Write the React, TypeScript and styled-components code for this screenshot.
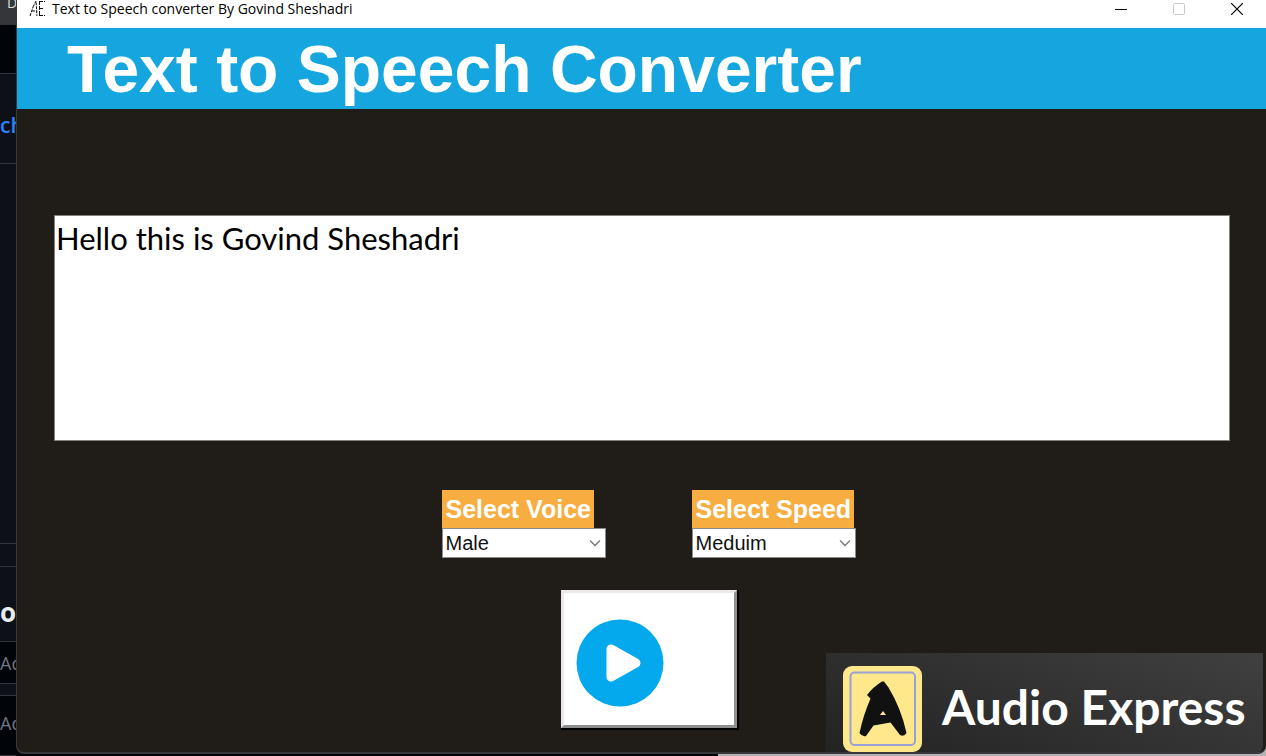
import React from "react";
import styled, { createGlobalStyle } from "styled-components";

const GlobalStyle = createGlobalStyle`
  * { box-sizing: border-box; }
  html, body, #root { height: 100%; margin: 0; }
  body { background: #010409; overflow: hidden; font-family: "Liberation Sans", Arial, sans-serif; }
`;

const Desktop = styled.div`
  display: flex;
  height: 100vh;
  background: linear-gradient(90deg, #020307 0 718px, #b5b2b2 718px);
`;

const Behind = styled.aside`
  width: 16px;
  flex: none;
  display: flex;
  flex-direction: column;
  overflow: hidden;
  white-space: nowrap;
  background: #0d1117;
  font-family: "Open Sans", "Noto Sans", sans-serif;
`;

const Strip = styled.div<{ $h: number; $bg?: string; $color?: string; $size?: number; $weight?: number; $left?: number; $top?: number; $bottom?: number }>`
  flex: none;
  height: ${(p) => p.$h}px;
  padding: ${(p) => p.$top ?? 0}px 0 ${(p) => p.$bottom ?? 0}px ${(p) => p.$left ?? 0}px;
  display: flex;
  align-items: center;
  border-bottom: 1px solid #30363d;
  background: ${(p) => p.$bg ?? "#0d1117"};
  color: ${(p) => p.$color ?? "#6e7681"};
  font-size: ${(p) => p.$size ?? 18}px;
  line-height: 24px;
  font-weight: ${(p) => p.$weight ?? 400};
`;

const AppWindow = styled.main`
  flex: 1;
  min-width: 0;
  margin-bottom: 2px;
  display: flex;
  flex-direction: column;
  border: solid #38373a;
  border-width: 0 0 2px 1px;
  border-radius: 0 0 8px 8px;
  background: #201c17;
  overflow: hidden;
`;

const TitleBar = styled.header`
  flex: none;
  height: 28px;
  padding: 0 21px 10px 12px;
  display: flex;
  align-items: center;
  gap: 6px;
  background: #fff;
  color: #000;
`;

const WindowTitle = styled.span`
  flex: 1;
  font: 14px/18px "Open Sans", "Noto Sans", sans-serif;
`;

const Controls = styled.div`
  display: flex;
  gap: 42px;
`;

const ControlButton = styled.button`
  width: 16px;
  height: 18px;
  padding: 0;
  border: 0;
  background: none;
  display: grid;
  place-items: center;
`;

const Banner = styled.h1`
  flex: none;
  height: 81px;
  margin: 0;
  padding: 1px 0 0 50px;
  background: #16a6df;
  color: #fff;
  font-size: 66px;
  line-height: 81px;
  font-weight: 700;
  white-space: nowrap;
`;

const Form = styled.form`
  flex: 1;
  min-height: 0;
  display: flex;
  flex-direction: column;
  padding: 106px 0 0;
`;

const Message = styled.textarea`
  flex: none;
  height: 226px;
  margin: 0 36px 49px 37px;
  padding: 3px 1px;
  border: 1px solid #828180;
  outline: 0;
  resize: none;
  background: #fff;
  color: #000;
  font: 31px/38px Lato, sans-serif;
`;

const Options = styled.div`
  display: flex;
  justify-content: center;
  gap: 86px;
  padding-left: 14px;
`;

const Field = styled.div`
  width: 164px;
  display: flex;
  flex-direction: column;
  align-items: flex-start;
`;

const FieldLabel = styled.label`
  height: 38px;
  padding: 0 3px 0 4px;
  background: #f8ad40;
  color: #fff;
  font-size: 25px;
  line-height: 38px;
  font-weight: 700;
  white-space: nowrap;
`;

const SelectWrap = styled.div`
  width: 100%;
  display: grid;
  align-items: center;
  & > * { grid-area: 1 / 1; }
  & > svg { justify-self: end; margin-right: 5px; pointer-events: none; }
`;

const Select = styled.select`
  width: 100%;
  height: 30px;
  padding: 0 3px;
  appearance: none;
  border: 1px solid #8c8c8c;
  border-radius: 0;
  background: #fff;
  color: #111;
  font: 20px/28px "Liberation Sans", Arial, sans-serif;
`;

const Footer = styled.div`
  flex: 1;
  min-height: 0;
  display: grid;
  grid-template-columns: 1fr 176px 1fr;
  padding: 32px 3px 0 17px;
`;

const PlayButton = styled.button`
  grid-column: 2;
  height: 138px;
  padding: 8px 0 0 12px;
  border: 3px solid;
  border-color: #ece8e9 #8f8f8f #8f8f8f #ece8e9;
  border-radius: 0;
  background: #fff;
  box-shadow: 1px 1px 0 1px #000;
  display: flex;
  align-items: center;
`;

const Brand = styled.div`
  grid-column: 3;
  justify-self: end;
  align-self: end;
  width: 437px;
  height: 99px;
  padding: 0 0 0 17px;
  display: flex;
  align-items: flex-end;
  gap: 20px;
  background: linear-gradient(20deg, #232323, #404040);
  border-radius: 0 0 6px 0;
`;

const BrandName = styled.span`
  padding-bottom: 17px;
  color: #fff;
  font: 700 48px/56px Lato, sans-serif;
  white-space: nowrap;
`;

function AppIcon() {
  return (
    <svg width="17" height="18" viewBox="0 0 17 18" fill="none" stroke="#111" aria-hidden="true">
      <path d="M1 16l3-9M4 7l3-6 1 15M3 11h5" strokeDasharray="3 1" />
      <path d="M10.500 1v15M10 1.500h6M10 8.500h5M10 15.500h6" strokeDasharray="4 1" />
    </svg>
  );
}

function BrandMark() {
  return (
    <svg width="79" height="86" viewBox="0 0 79 86" aria-hidden="true">
      <rect width="79" height="86" rx="9" fill="#ffe78b" />
      <rect x="7.500" y="6.500" width="64.500" height="72.500" rx="4" fill="none" stroke="#98a0d8" strokeWidth="2" />
      <path d="M39 15.500Q30 21 24 29L27.500 32.500Q20 50 16.500 67Q19 71 23 70L30.500 59.500L47.500 56.500L57 69Q61 71 63.500 67Q58 42 45.500 21.500L41 15.500Z" fill="#111" />
      <path d="M37 49l3-4 3 4z" fill="#ffe78b" />
    </svg>
  );
}

interface OptionProps {
  id: string;
  label: string;
  value: string;
  options: string[];
}

function OptionField({ id, label, value, options }: OptionProps) {
  return (
    <Field>
      <FieldLabel htmlFor={id}>{label}</FieldLabel>
      <SelectWrap>
        <Select id={id} defaultValue={value}>
          {options.map((o) => (
            <option key={o}>{o}</option>
          ))}
        </Select>
        <svg width="12" height="8" viewBox="0 0 12 8" fill="none" stroke="#777" strokeWidth="1.300">
          <path d="M1 1.500l5 5 5-5" />
        </svg>
      </SelectWrap>
    </Field>
  );
}

export default function App() {
  return (
    <>
      <GlobalStyle />
      <Desktop>
        <Behind>
          <Strip $h={25} $bg="#35363a" $color="#ddd" $size={14} $left={7} $bottom={18}>D</Strip>
          <Strip $h={49} $bg="#010409" />
          <Strip $h={90} $color="#2f81f7" $size={21} $weight={600} $top={12}>ch</Strip>
          <Strip $h={380} />
          <Strip $h={23} />
          <Strip $h={75} $color="#e6edf3" $size={26} $weight={700} $top={16}>o</Strip>
          <Strip $h={42} $bg="#010409">Add</Strip>
          <Strip $h={12} />
          <Strip $h={60} $bg="#010409" $bottom={6}>Add</Strip>
        </Behind>
        <AppWindow>
          <TitleBar>
            <AppIcon />
            <WindowTitle>Text to Speech converter By Govind Sheshadri</WindowTitle>
            <Controls>
              <ControlButton aria-label="Minimize">
                <svg width="12" height="12" stroke="#000"><path d="M0 6.500h12" /></svg>
              </ControlButton>
              <ControlButton aria-label="Maximize" disabled>
                <svg width="12" height="12" fill="none" stroke="#c8c8c8"><rect x="0.500" y="0.500" width="11" height="11" rx="1" /></svg>
              </ControlButton>
              <ControlButton aria-label="Close">
                <svg width="12" height="12" stroke="#000" strokeWidth="1.200"><path d="M0 0l12 12M12 0L0 12" /></svg>
              </ControlButton>
            </Controls>
          </TitleBar>
          <Banner>Text to Speech Converter</Banner>
          <Form onSubmit={(e) => e.preventDefault()}>
            <Message aria-label="Text to speak" spellCheck={false} defaultValue="Hello this is Govind Sheshadri" />
            <Options>
              <OptionField id="voice" label="Select Voice" value="Male" options={["Male", "Female"]} />
              <OptionField id="speed" label="Select Speed" value="Meduim" options={["Fast", "Meduim", "Slow"]} />
            </Options>
            <Footer>
              <PlayButton type="submit" aria-label="Play">
                <svg width="88" height="88" viewBox="0 0 88 88" aria-hidden="true">
                  <circle cx="44" cy="44" r="43.500" fill="#04a8ec" />
                  <path d="M35 30L60 44L35 58Z" fill="#fff" stroke="#fff" strokeWidth="9" strokeLinejoin="round" />
                </svg>
              </PlayButton>
              <Brand>
                <BrandMark />
                <BrandName>Audio Express</BrandName>
              </Brand>
            </Footer>
          </Form>
        </AppWindow>
      </Desktop>
    </>
  );
}
